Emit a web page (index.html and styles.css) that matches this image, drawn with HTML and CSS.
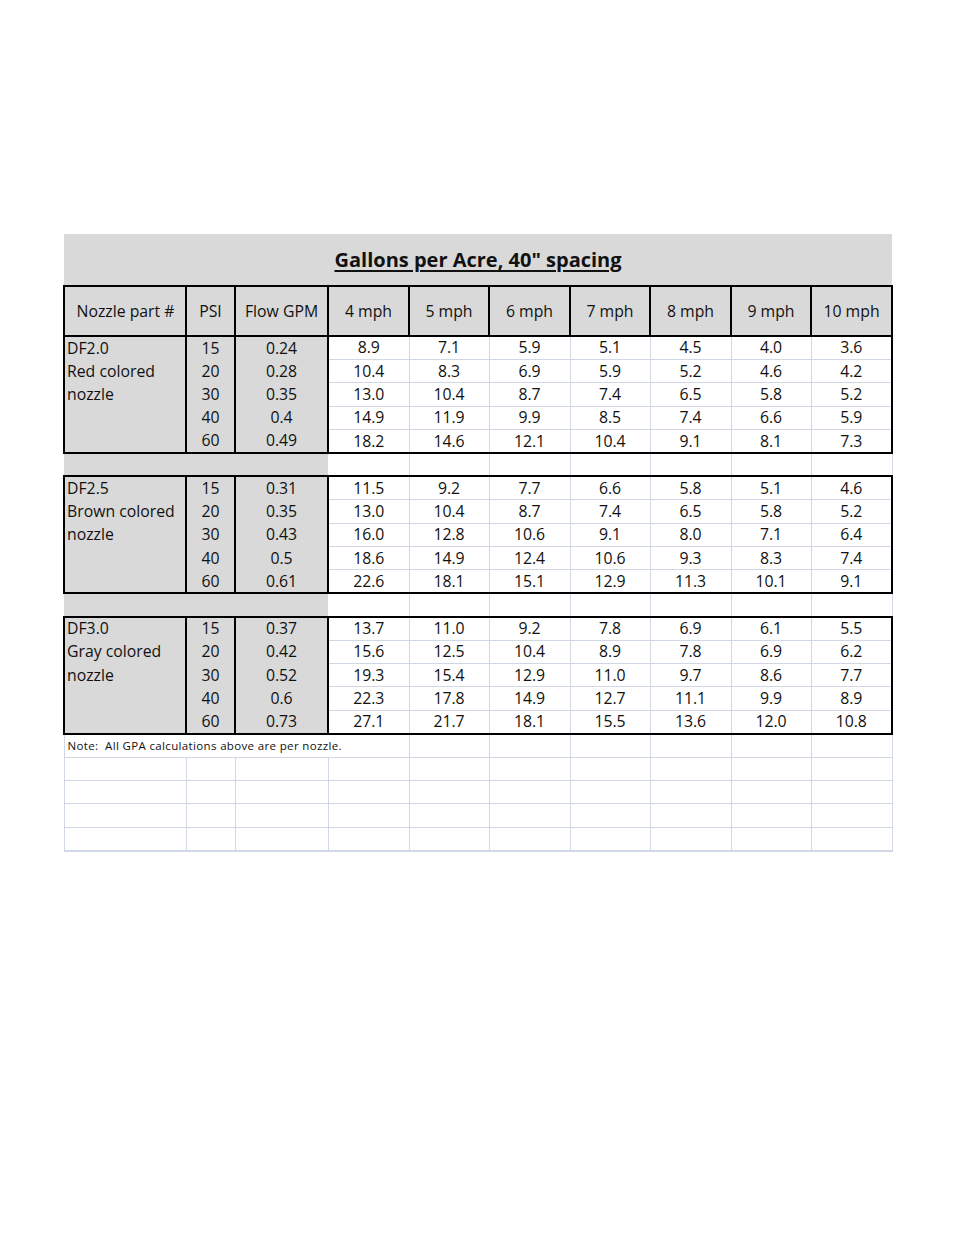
FILE: index.html
```html
<!DOCTYPE html>
<html>
<head>
<meta charset="utf-8">
<link rel="stylesheet" href="styles.css">
</head>
<body>
<div class="page">
<table class="gpa">
<colgroup>
<col class="c-name"><col class="c-psi"><col class="c-flow">
<col class="c-v"><col class="c-v2"><col class="c-v"><col class="c-v2"><col class="c-v"><col class="c-v2"><col class="c-v3">
</colgroup>
<tr class="title-row"><td colspan="10" class="title"><span>Gallons per Acre, 40" spacing</span></td></tr>
<tr class="head-row">
<th class="h-name">Nozzle part #</th><th>PSI</th><th>Flow GPM</th>
<th>4 mph</th><th>5 mph</th><th>6 mph</th><th>7 mph</th><th>8 mph</th><th>9 mph</th><th class="last">10 mph</th>
</tr>

<tr class="first"><td class="name">DF2.0</td><td class="psi">15</td><td class="flow">0.24</td><td class="v">8.9</td><td class="v">7.1</td><td class="v">5.9</td><td class="v">5.1</td><td class="v">4.5</td><td class="v">4.0</td><td class="v last">3.6</td></tr>
<tr><td class="name">Red colored</td><td class="psi">20</td><td class="flow">0.28</td><td class="v">10.4</td><td class="v">8.3</td><td class="v">6.9</td><td class="v">5.9</td><td class="v">5.2</td><td class="v">4.6</td><td class="v last">4.2</td></tr>
<tr><td class="name">nozzle</td><td class="psi">30</td><td class="flow">0.35</td><td class="v">13.0</td><td class="v">10.4</td><td class="v">8.7</td><td class="v">7.4</td><td class="v">6.5</td><td class="v">5.8</td><td class="v last">5.2</td></tr>
<tr><td class="name"></td><td class="psi">40</td><td class="flow">0.4</td><td class="v">14.9</td><td class="v">11.9</td><td class="v">9.9</td><td class="v">8.5</td><td class="v">7.4</td><td class="v">6.6</td><td class="v last">5.9</td></tr>
<tr class="end"><td class="name"></td><td class="psi">60</td><td class="flow">0.49</td><td class="v">18.2</td><td class="v">14.6</td><td class="v">12.1</td><td class="v">10.4</td><td class="v">9.1</td><td class="v">8.1</td><td class="v last">7.3</td></tr>

<tr class="gap"><td colspan="3" class="gfill"></td><td class="e"></td><td class="e"></td><td class="e"></td><td class="e"></td><td class="e"></td><td class="e"></td><td class="e"></td></tr>

<tr class="first"><td class="name">DF2.5</td><td class="psi">15</td><td class="flow">0.31</td><td class="v">11.5</td><td class="v">9.2</td><td class="v">7.7</td><td class="v">6.6</td><td class="v">5.8</td><td class="v">5.1</td><td class="v last">4.6</td></tr>
<tr><td class="name">Brown colored</td><td class="psi">20</td><td class="flow">0.35</td><td class="v">13.0</td><td class="v">10.4</td><td class="v">8.7</td><td class="v">7.4</td><td class="v">6.5</td><td class="v">5.8</td><td class="v last">5.2</td></tr>
<tr><td class="name">nozzle</td><td class="psi">30</td><td class="flow">0.43</td><td class="v">16.0</td><td class="v">12.8</td><td class="v">10.6</td><td class="v">9.1</td><td class="v">8.0</td><td class="v">7.1</td><td class="v last">6.4</td></tr>
<tr><td class="name"></td><td class="psi">40</td><td class="flow">0.5</td><td class="v">18.6</td><td class="v">14.9</td><td class="v">12.4</td><td class="v">10.6</td><td class="v">9.3</td><td class="v">8.3</td><td class="v last">7.4</td></tr>
<tr class="end"><td class="name"></td><td class="psi">60</td><td class="flow">0.61</td><td class="v">22.6</td><td class="v">18.1</td><td class="v">15.1</td><td class="v">12.9</td><td class="v">11.3</td><td class="v">10.1</td><td class="v last">9.1</td></tr>

<tr class="gap"><td colspan="3" class="gfill"></td><td class="e"></td><td class="e"></td><td class="e"></td><td class="e"></td><td class="e"></td><td class="e"></td><td class="e"></td></tr>

<tr class="first"><td class="name">DF3.0</td><td class="psi">15</td><td class="flow">0.37</td><td class="v">13.7</td><td class="v">11.0</td><td class="v">9.2</td><td class="v">7.8</td><td class="v">6.9</td><td class="v">6.1</td><td class="v last">5.5</td></tr>
<tr><td class="name">Gray colored</td><td class="psi">20</td><td class="flow">0.42</td><td class="v">15.6</td><td class="v">12.5</td><td class="v">10.4</td><td class="v">8.9</td><td class="v">7.8</td><td class="v">6.9</td><td class="v last">6.2</td></tr>
<tr><td class="name">nozzle</td><td class="psi">30</td><td class="flow">0.52</td><td class="v">19.3</td><td class="v">15.4</td><td class="v">12.9</td><td class="v">11.0</td><td class="v">9.7</td><td class="v">8.6</td><td class="v last">7.7</td></tr>
<tr><td class="name"></td><td class="psi">40</td><td class="flow">0.6</td><td class="v">22.3</td><td class="v">17.8</td><td class="v">14.9</td><td class="v">12.7</td><td class="v">11.1</td><td class="v">9.9</td><td class="v last">8.9</td></tr>
<tr class="end"><td class="name"></td><td class="psi">60</td><td class="flow">0.73</td><td class="v">27.1</td><td class="v">21.7</td><td class="v">18.1</td><td class="v">15.5</td><td class="v">13.6</td><td class="v">12.0</td><td class="v last">10.8</td></tr>

<tr class="note-row"><td colspan="4" class="note">Note:&nbsp; All GPA calculations above are per nozzle.</td><td class="e"></td><td class="e"></td><td class="e"></td><td class="e"></td><td class="e"></td><td class="e"></td></tr>
<tr class="blank"><td class="e"></td><td class="e"></td><td class="e"></td><td class="e"></td><td class="e"></td><td class="e"></td><td class="e"></td><td class="e"></td><td class="e"></td><td class="e"></td></tr>
<tr class="blank"><td class="e"></td><td class="e"></td><td class="e"></td><td class="e"></td><td class="e"></td><td class="e"></td><td class="e"></td><td class="e"></td><td class="e"></td><td class="e"></td></tr>
<tr class="blank"><td class="e"></td><td class="e"></td><td class="e"></td><td class="e"></td><td class="e"></td><td class="e"></td><td class="e"></td><td class="e"></td><td class="e"></td><td class="e"></td></tr>
<tr class="blank bottom"><td class="e"></td><td class="e"></td><td class="e"></td><td class="e"></td><td class="e"></td><td class="e"></td><td class="e"></td><td class="e"></td><td class="e"></td><td class="e"></td></tr>
</table>
</div>
</body>
</html>
```
FILE: styles.css
```css
html, body {
  margin: 0;
  padding: 0;
  background: #ffffff;
}
.page {
  padding: 234px 0 0 63px;
}
.gpa {
  border-collapse: collapse;
  table-layout: fixed;
  width: 828px;
  font-family: "Open Sans", "Liberation Sans", sans-serif;
  font-size: 15.8px;
  color: #111;
}
.c-name { width: 122px; }
.c-psi { width: 49px; }
.c-flow { width: 93px; }
.c-v { width: 81px; }
.c-v2 { width: 80px; }
.c-v3 { width: 81px; }

.gpa td, .gpa th {
  padding: 0;
  white-space: nowrap;
  overflow: visible;
  line-height: 1.2;
}
.gpa tr { height: 23.4px; }

.title-row { height: 52px !important; }
.title {
  background: #d9d9d9;
  text-align: center;
  vertical-align: middle;
  font-size: 20px;
  font-weight: 700;
  padding-top: 1px !important;
}
.title span {
  text-decoration: underline;
  text-underline-offset: 3px;
  text-decoration-thickness: 2px;
}

.head-row { height: 50px !important; }
.head-row th {
  background: #d9d9d9;
  font-weight: 400;
  text-align: center;
  vertical-align: middle;
  border: 2px solid #000;
}
.head-row th.h-name { padding-left: 1px; }

.name {
  background: #d9d9d9;
  text-align: left;
  padding-left: 2px !important;
  border-left: 2px solid #000;
  border-right: 2px solid #000;
}
.psi, .flow {
  background: #d9d9d9;
  text-align: center;
  border-right: 2px solid #000;
}
.v {
  text-align: center;
  background: #fff;
  border-bottom: 1px solid #d0d7e5;
  border-right: 1px solid #d0d7e5;
}
.v.last { border-right: 2px solid #000; }
.first td { border-top: 2px solid #000; }
.end td { border-bottom: 2px solid #000; }

.gfill { background: #d9d9d9; }
.e {
  background: #fff;
  border-right: 1px solid #d0d7e5;
  border-bottom: 1px solid #d0d7e5;
}
.blank .e:first-child { border-left: 1px solid #d0d7e5; }
.bottom .e { border-bottom: 2px solid #d0d7e5; }

.note {
  font-size: 11.5px;
  letter-spacing: 0.35px;
  padding-left: 3px !important;
  border-left: 1px solid #d0d7e5;
  border-bottom: 1px solid #d0d7e5;
  border-right: 1px solid #d0d7e5;
  vertical-align: middle;
}
```
